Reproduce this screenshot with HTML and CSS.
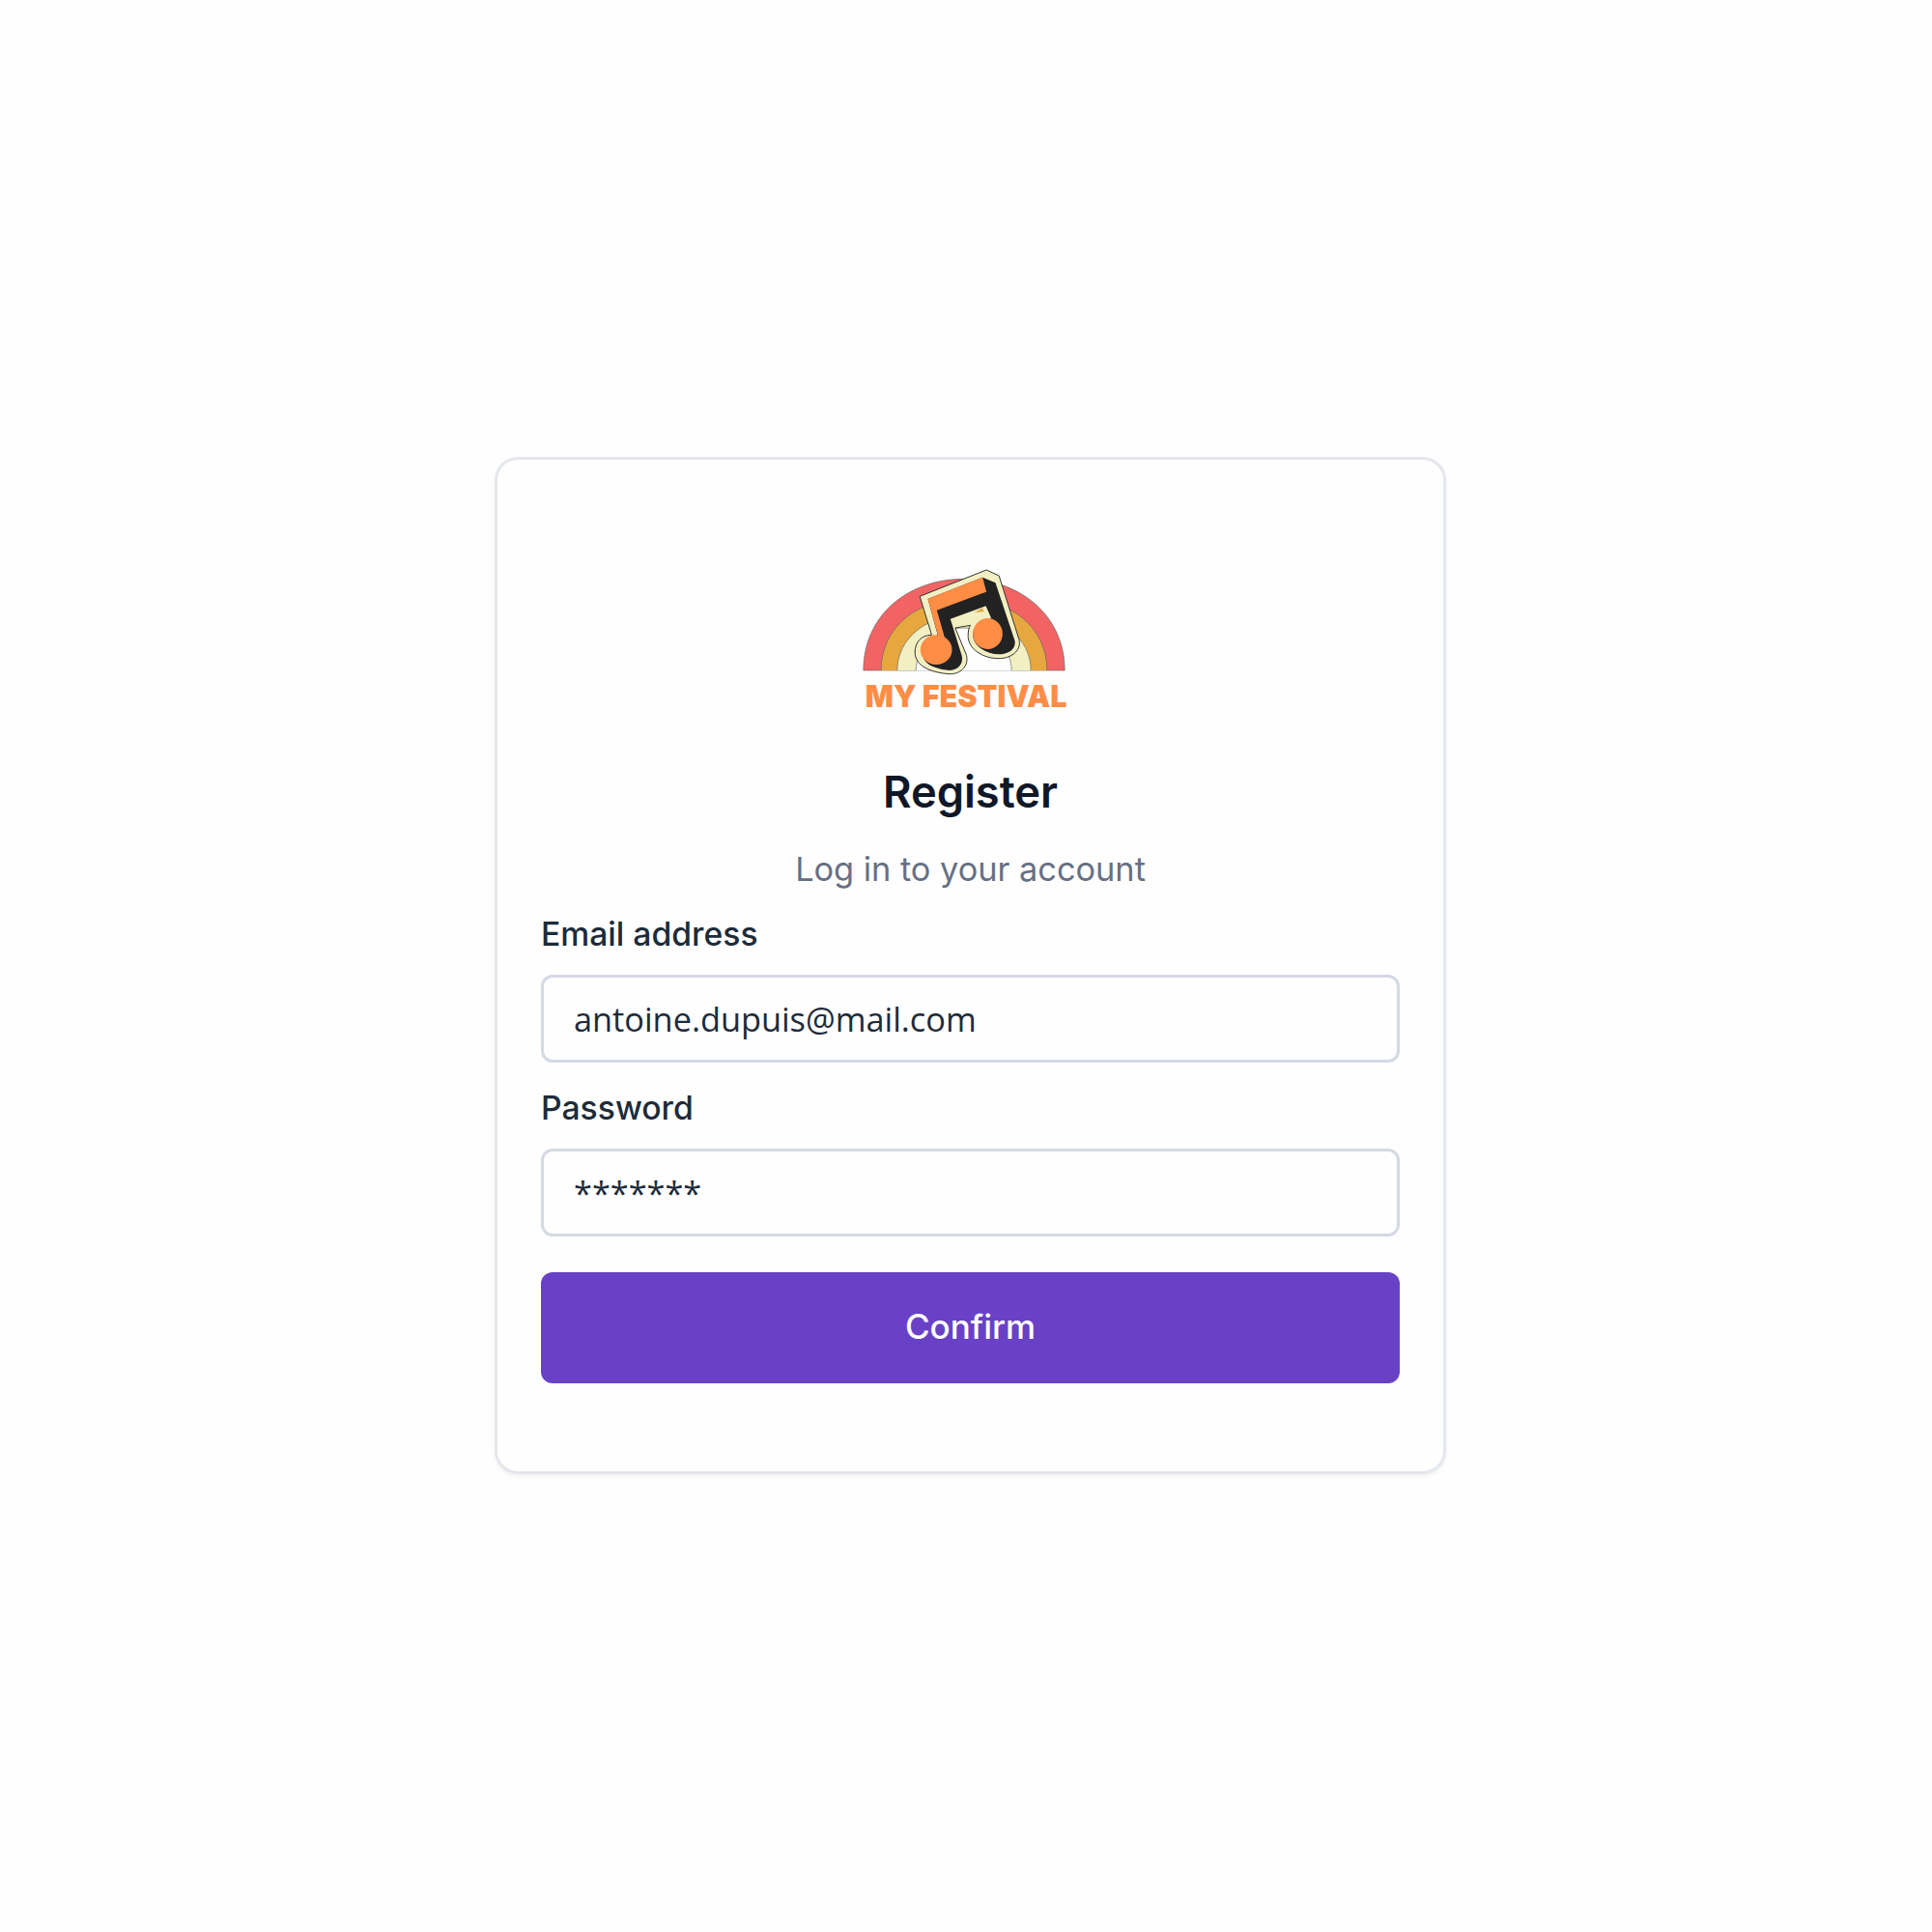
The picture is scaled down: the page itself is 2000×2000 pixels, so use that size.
FILE: index.html
```html
<!DOCTYPE html>
<html lang="en">
<head>
<meta charset="utf-8">
<title>Register</title>
<link rel="stylesheet" href="styles.css">
</head>
<body>
<main class="card">
  <svg class="logo" viewBox="43.5 0 780 540" role="img" aria-label="My Festival">
    <path class="arc" fill="#f26464" d="M100 372C100 200 240 88 412 88S725 200 725 372Z"/>
    <path class="arc" fill="#e6a83e" d="M155 372C155 235 270 150 412 150S670 235 670 372"/>
    <path class="arc" fill="#f2efc2" d="M205 372C205 270 300 200 412 200S620 270 620 372"/>
    <path fill="#fefefe" d="M263 373C263 300 330 240 412 240S560 300 560 373Z"/>
    <path class="arc" fill="none" d="M263 372C263 300 330 240 412 240S560 300 560 372"/>
    <path class="note-edge" d="M275 142L482 60L521 78L583 275C592 305 565 335 520 335C470 335 425 305 425 265C425 250 427 240 432 232L385 240L420 325C428 360 400 385 365 383C310 378 260 360 260 315C260 285 280 262 312 262Z"/>
    <path fill="#222" d="M470 83L510 100L570 280C575 305 550 322 520 322C480 322 440 295 440 262C440 235 465 212 497 210L480 172L370 212L405 325C412 350 395 372 365 372C320 368 285 350 285 325L330 260L300 150Z"/>
    <path fill="#e6a83e" d="M445 192L470 178L474 190Z"/>
    <path fill="#ff8d45" d="M300 150L470 83L482 128L328 185L355 280L335 275Z"/>
    <ellipse fill="#ff8d45" cx="326" cy="308" rx="49" ry="46"/>
    <ellipse fill="#ff8d45" cx="486" cy="258" rx="46" ry="48"/>
    <text class="logo-text" x="106" y="485" textLength="626" lengthAdjust="spacingAndGlyphs">MY FESTIVAL</text>
  </svg>
  <h1 class="title">Register</h1>
  <p class="subtitle">Log in to your account</p>
  <form class="form">
    <label class="label" for="email">Email address</label>
    <input class="input" id="email" type="text" value="antoine.dupuis@mail.com">
    <label class="label label-next" for="password">Password</label>
    <input class="input" id="password" type="text" value="*******">
    <button class="button" type="button">Confirm</button>
  </form>
</main>
</body>
</html>
```
FILE: styles.css
```css
* { box-sizing: border-box; }
html, body { margin: 0; }
body {
  min-height: 2000px;
  padding-left: 9px;
  display: flex;
  align-items: center;
  justify-content: center;
  background: #fefefe;
  font-family: Inter, "Liberation Sans", sans-serif;
}
.card {
  width: 985px;
  height: 1053px;
  margin-top: -1px;
  padding: 94px 45px 90px;
  background: #fefefe;
  border: 3px solid #e4e7ec;
  border-radius: 24px;
  box-shadow: 0 2px 4px rgba(16, 24, 40, 0.06);
  display: flex;
  flex-direction: column;
}
.logo { display: block; width: 260px; height: 180px; align-self: center; }
.arc { stroke: #666; stroke-width: 2; }
.note-edge { fill: #f2efc2; stroke: #333; stroke-width: 3; stroke-linejoin: round; }
.logo-text { font-family: Inter, sans-serif; font-weight: 900; font-size: 96px; fill: #ff8d45; }
.title {
  margin: 40px 0 0;
  font-size: 45.3px;
  line-height: 60px;
  font-weight: 600;
  color: #101828;
  text-align: center;
}
.subtitle {
  margin: 25px 0 0;
  font-size: 34.3px;
  line-height: 50px;
  color: #667085;
  text-align: center;
}
.form { display: flex; flex-direction: column; margin-top: 22px; }
.label {
  font-size: 33.7px;
  line-height: 40px;
  font-weight: 500;
  color: #1d2b3a;
  margin-bottom: 22px;
}
.label-next { margin-top: 27px; }
.input {
  height: 91px;
  padding: 0 31px;
  border: 3px solid #d5d9e4;
  border-radius: 12px;
  background: #fefefe;
  font-family: "Open Sans", sans-serif;
  font-size: 34.3px;
  color: #1d2b3a;
  outline: none;
}
.button {
  margin-top: 37px;
  height: 115px;
  padding-bottom: 4px;
  border: 0;
  border-radius: 12px;
  background: #6941c6;
  color: #fff;
  font-family: Inter, sans-serif;
  font-size: 35px;
  font-weight: 500;
}
```
